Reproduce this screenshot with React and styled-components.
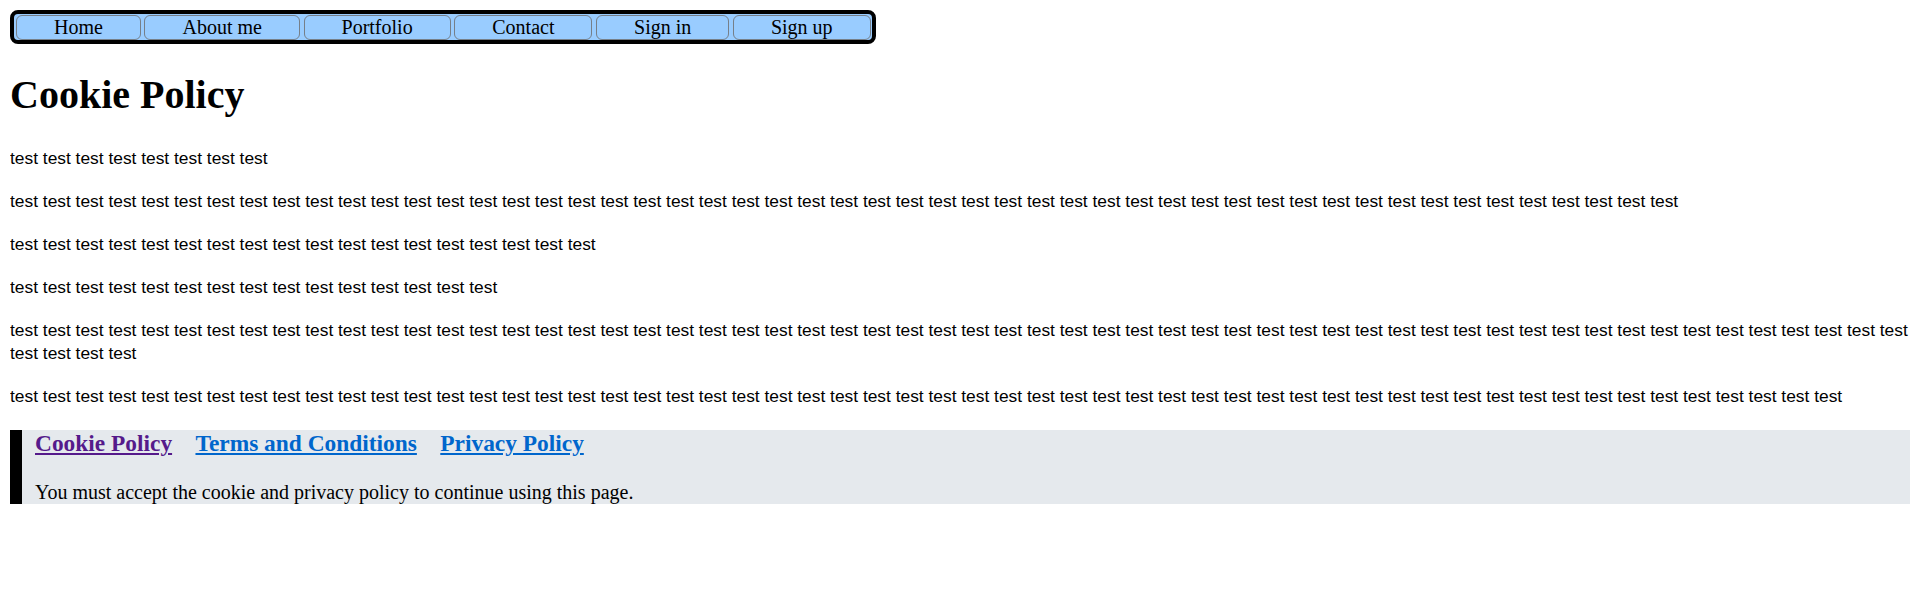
import React from 'react'
import styled, { createGlobalStyle } from 'styled-components'

const serif = `'Liberation Serif', 'Times New Roman', serif`
const sans = `'Liberation Sans', Arial, sans-serif`

const GlobalStyle = createGlobalStyle`
  html, body {
    background: #ffffff;
  }
  body {
    margin: 10px;
    font-family: ${ serif };
    font-size: 20px;
    color: #000000;
  }
`

const Nav = styled.nav`
  display: inline-flex;
  align-items: stretch;
  gap: 3.6px;
  padding: 1px 1px 0 2px;
  background: #99ccff;
  border: 4px solid #000000;
  border-radius: 8px;
`

const NavButton = styled.a`
  display: block;
  padding: 0 37px;
  line-height: 23px;
  font-family: ${ serif };
  font-size: 20px;
  color: #000000;
  text-decoration: none;
  background: #99ccff;
  border: 1px solid #767f89;
  border-radius: 6px;
  cursor: pointer;
`

const Title = styled.h1`
  margin: 27px 0 29px;
  font-family: ${ serif };
  font-size: 40px;
  font-weight: 700;
`

const Paragraph = styled.p`
  margin: 20px 0;
  font-family: ${ sans };
  font-size: 17.36px;
  line-height: 23px;
`

const Footer = styled.footer`
  margin-top: 22px;
  padding-left: 13px;
  background: #e5e9ed;
  border-left: 12px solid #000000;
`

const FooterLinks = styled.h3`
  display: flex;
  gap: 23.4px;
  margin: 0 0 24px;
  font-family: ${ serif };
  font-size: 23.4px;
  font-weight: 700;
`

const FooterLink = styled.a`
  color: ${ ({ $visited }) => ($visited ? '#551a8b' : '#0066cc') };
  text-decoration: underline;
  cursor: pointer;
`

const Notice = styled.p`
  margin: 0;
  font-family: ${ serif };
  font-size: 20px;
`

const navItems = ['Home', 'About me', 'Portfolio', 'Contact', 'Sign in', 'Sign up']

// number of "test" words in each paragraph
const paragraphs = [8, 51, 18, 15, 62, 56]

const repeat = (n) => Array(n).fill('test').join(' ')

const App = () => (
  <>
    <GlobalStyle />
    <Nav>
      {navItems.map((item) => (
        <NavButton key={item}>{item}</NavButton>
      ))}
    </Nav>
    <Title>Cookie Policy</Title>
    {paragraphs.map((count, i) => (
      <Paragraph key={i}>{repeat(count)}</Paragraph>
    ))}
    <Footer>
      <FooterLinks>
        <FooterLink $visited>Cookie Policy</FooterLink>
        <FooterLink>Terms and Conditions</FooterLink>
        <FooterLink>Privacy Policy</FooterLink>
      </FooterLinks>
      <Notice>You must accept the cookie and privacy policy to continue using this page.</Notice>
    </Footer>
  </>
)

export default App
